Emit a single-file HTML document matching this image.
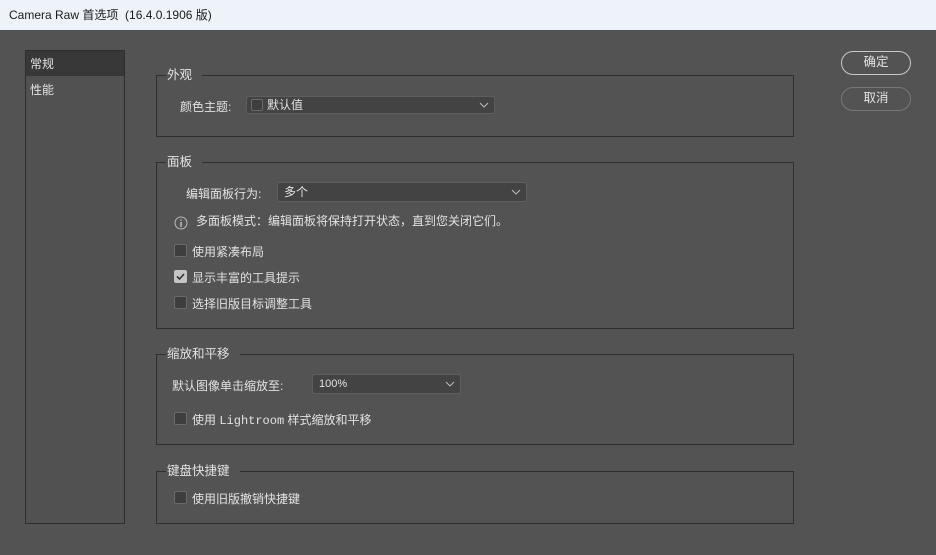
<!DOCTYPE html>
<html><head><meta charset="utf-8"><style>
*{margin:0;padding:0;box-sizing:border-box}
body{width:936px;height:555px;background:#535353;position:relative;overflow:hidden;font-family:"Liberation Sans","Noto Sans CJK SC",sans-serif;font-size:12px;color:#e2e2e2}
.a{position:absolute;white-space:nowrap}
.title{left:0;top:0;width:936px;height:30px;background:#eef3f9;color:#1a1a1a;font-size:12px;line-height:30px;padding-left:9px}
.side{left:25px;top:50px;width:100px;height:474px;border:1px solid #2e2e2e;background:#515151}
.sel{left:26px;top:51px;width:98px;height:25px;background:#383838}
.box{border:1px solid #2f2f2f}
.leg{background:#535353;padding:0 10px 0 1px;line-height:14px;font-size:12.5px}
.dd{background:#434343;border:1px solid #5e5e5e;border-radius:2px;line-height:16px;padding-left:6px}
.chev{position:absolute;right:5px;top:3px;width:10px;height:10px}
.cb{width:13px;height:13px;border:1px solid #6a6a6a;background:#3e3e3e;border-radius:2px}
.btn{width:70px;height:24px;border:1.5px solid #c8c8c8;border-radius:12px;text-align:center;line-height:21px;font-size:12.5px}
</style></head><body>
<div class="a title">Camera Raw 首选项&nbsp; (16.4.0.1906 版)</div>
<div class="a side"></div>
<div class="a sel"></div>
<div class="a" style="left:30px;top:55px">常规</div>
<div class="a" style="left:30px;top:81px">性能</div>

<div class="a btn" style="left:841px;top:51px">确定</div>
<div class="a btn" style="left:841px;top:87px;border-color:#777">取消</div>

<div class="a box" style="left:156px;top:75px;width:638px;height:62px"></div>
<div class="a leg" style="left:166px;top:68px">外观</div>
<div class="a" style="left:180px;top:98px">颜色主题:</div>
<div class="a dd" style="left:246px;top:96px;width:249px;height:18px"><span class="a cb" style="left:4px;top:2px;width:12px;height:12px"></span><span style="padding-left:14px">默认值</span><svg class="chev" viewBox="0 0 10 10"><path d="M1 3l4 4 4-4" stroke="#bbb" fill="none"/></svg></div>

<div class="a box" style="left:156px;top:162px;width:638px;height:167px"></div>
<div class="a leg" style="left:166px;top:155px">面板</div>
<div class="a" style="left:186px;top:185px">编辑面板行为:</div>
<div class="a dd" style="left:277px;top:182px;width:250px;height:20px;line-height:18px">多个<svg class="chev" viewBox="0 0 10 10" style="top:4px"><path d="M1 3l4 4 4-4" stroke="#bbb" fill="none"/></svg></div>
<svg class="a" style="left:174px;top:216px" width="14" height="14" viewBox="0 0 14 14"><circle cx="7" cy="7" r="6" stroke="#bbb" fill="none"/><path d="M7 6v5M7 3.5v1.2" stroke="#ccc" stroke-width="1.3"/></svg>
<div class="a" style="left:196px;top:212px">多面板模式：编辑面板将保持打开状态，直到您关闭它们。</div>
<div class="a cb" style="left:174px;top:244px"></div><div class="a" style="left:192px;top:243px">使用紧凑布局</div>
<div class="a cb" style="left:174px;top:270px;background:#c4c4c4;border-color:#c4c4c4"><svg width="11" height="11" viewBox="0 0 11 11" style="position:absolute;left:0;top:0"><path d="M2 5.5l2.5 2.5 4.5-5" stroke="#333" stroke-width="1.6" fill="none"/></svg></div><div class="a" style="left:192px;top:269px">显示丰富的工具提示</div>
<div class="a cb" style="left:174px;top:296px"></div><div class="a" style="left:192px;top:295px">选择旧版目标调整工具</div>

<div class="a box" style="left:156px;top:354px;width:638px;height:91px"></div>
<div class="a leg" style="left:166px;top:347px">缩放和平移</div>
<div class="a" style="left:172px;top:377px">默认图像单击缩放至:</div>
<div class="a dd" style="left:312px;top:374px;width:149px;height:20px;line-height:18px;font-size:11px">100%<svg class="chev" viewBox="0 0 10 10" style="top:4px"><path d="M1 3l4 4 4-4" stroke="#bbb" fill="none"/></svg></div>
<div class="a cb" style="left:174px;top:412px"></div><div class="a" style="left:192px;top:411px">使用 <span style="font-family:'Liberation Mono',monospace">Lightroom</span> 样式缩放和平移</div>

<div class="a box" style="left:156px;top:471px;width:638px;height:53px"></div>
<div class="a leg" style="left:166px;top:464px">键盘快捷键</div>
<div class="a cb" style="left:174px;top:491px"></div><div class="a" style="left:192px;top:490px">使用旧版撤销快捷键</div>
</body></html>
